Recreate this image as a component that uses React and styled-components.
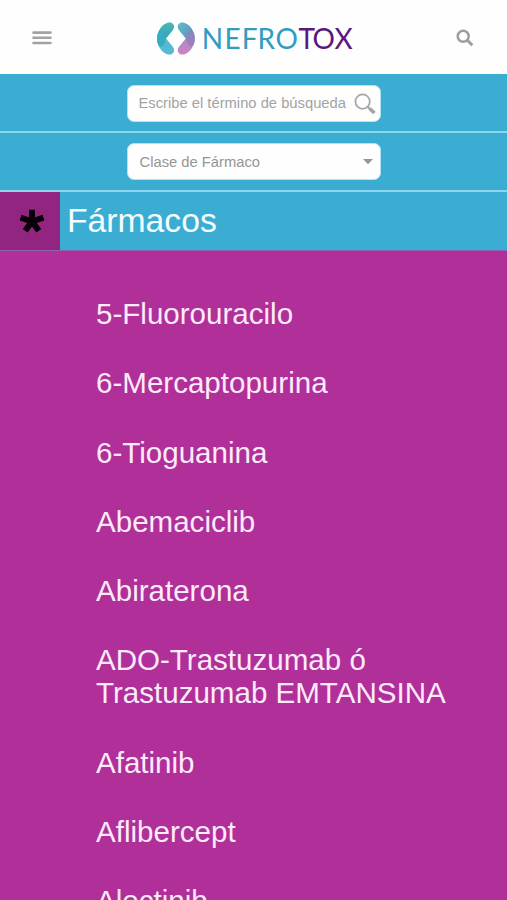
import React from "react";
import styled, { createGlobalStyle } from "styled-components";

const GlobalStyle = createGlobalStyle`
  * { box-sizing: border-box; }
  html, body { margin: 0; overflow: hidden; background: #b02f99; }
  body, input, button { font-family: "Liberation Sans", Arial, sans-serif; }
`;

const Page = styled.div`
  display: flex;
  flex-direction: column;
  height: 900px;
  overflow: hidden;
  background: #b02f99;
`;

const Header = styled.header`
  display: flex;
  flex: none;
  align-items: center;
  justify-content: space-between;
  height: 74px;
  padding: 1px 33px 0 32px;
  background: #fefefe;
`;

const IconButton = styled.button`
  display: flex;
  padding: 0;
  border: 0;
  background: none;
`;

const Logo = styled.svg`
  display: block;
  margin-top: 2px;
  margin-right: -1px;
`;

const LogoText = styled.text`
  font-family: Lato, sans-serif;
  font-size: 28px;
  font-weight: 400;
  fill: ${(p) => p.$color};
`;

const FilterBar = styled.div`
  display: flex;
  flex: none;
  justify-content: center;
  height: ${(p) => p.$height}px;
  padding-top: ${(p) => p.$top}px;
  border-bottom: 2px solid #8ed5ee;
  background: #3badd3;
`;

const Field = styled.div`
  display: flex;
  align-items: center;
  justify-content: space-between;
  width: 254px;
  height: 37px;
  padding: 0 ${(p) => p.$right}px 0 ${(p) => p.$left}px;
  border: 1px solid #b5e2f1;
  border-radius: 7px;
  background: #fefefe;
`;

const SearchInput = styled.input`
  width: 213px;
  height: 20px;
  margin-top: -2px;
  padding: 0;
  border: 0;
  outline: 0;
  background: none;
  font-size: 14.75px;
  &::placeholder { color: #a3a3a3; opacity: 1; }
`;

const SelectLabel = styled.span`
  color: #969696;
  font-size: 14.75px;
  line-height: 20px;
`;

const SectionBar = styled.div`
  display: flex;
  flex: none;
  height: 59px;
  border-bottom: 1px solid #8b63b3;
  background: #3badd3;
`;

const SectionMark = styled.div`
  display: flex;
  align-items: center;
  justify-content: center;
  width: 60px;
  padding-left: 4px;
  background: #91257f;
`;

const SectionTitle = styled.h1`
  margin: 0;
  padding: 8px 0 0 7px;
  color: #f4fdff;
  font-size: 33.7px;
  font-weight: 400;
  line-height: 40px;
`;

const DrugList = styled.ul`
  display: flex;
  flex-direction: column;
  gap: 36.3px;
  margin: 0;
  padding: 46px 50px 0 96px;
  list-style: none;
`;

const Drug = styled.li`
  flex: none;
  color: #fdeafb;
  font-size: 29.55px;
  line-height: 33px;
`;

const drugs = [
  "5-Fluorouracilo",
  "6-Mercaptopurina",
  "6-Tioguanina",
  "Abemaciclib",
  "Abiraterona",
  "ADO-Trastuzumab ó Trastuzumab EMTANSINA",
  "Afatinib",
  "Aflibercept",
  "Alectinib",
];

function NefrotoxLogo() {
  return (
    <Logo width="196" height="36" viewBox="157 21 196 36" role="img" aria-label="Nefrotox">
      <defs>
        <linearGradient id="leftTop" x1="0" y1="0" x2="0" y2="1">
          <stop offset="0" stopColor="#4ab9b5" />
          <stop offset="1" stopColor="#2597b5" />
        </linearGradient>
        <linearGradient id="rightTop" x1="0" y1="0" x2="1" y2="1">
          <stop offset="0" stopColor="#53c2cc" />
          <stop offset="1" stopColor="#7779b8" />
        </linearGradient>
        <linearGradient id="rightBottom" x1="0" y1="0" x2="0" y2="1">
          <stop offset="0" stopColor="#8089c0" />
          <stop offset="1" stopColor="#ca70bb" />
        </linearGradient>
      </defs>
      <path d="M173.3 24.2C170.5 20.3 163.8 23.2 160.5 28C156.2 34.2 156 43 159.4 46.5C162.6 48 164.8 44 166 38.5L172.6 30.6C174.3 28.5 174.6 26.2 173.3 24.2Z" fill="url(#leftTop)" />
      <path d="M173.3 52.8C170.5 56.7 163.8 53.8 160.5 49C156.2 42.8 156 34 159.4 30.5C162.6 29.5 164.8 34 166 38.5L172.6 46.4C174.3 48.5 174.6 50.8 173.3 52.8Z" fill="#37aec8" opacity=".85" />
      <path d="M178.5 24.2C181.3 20.3 188 23.2 191.3 28C195.6 34.2 195.8 43 192.4 46.5C189.2 48 187 44 185.8 38.5L179.2 30.6C177.5 28.5 177.2 26.2 178.5 24.2Z" fill="url(#rightTop)" />
      <path d="M178.5 52.8C181.3 56.7 188 53.8 191.3 49C195.6 42.8 195.8 34 192.4 30.5C189.2 29.5 187 34 185.8 38.5L179.2 46.4C177.5 48.5 177.2 50.8 178.5 52.8Z" fill="url(#rightBottom)" opacity=".88" />
      <LogoText $color="#319dbe" x="201.8 224.6 241.8 257.6 275.6" y="48.6">NEFRO</LogoText>
      <LogoText $color="#5c177e" x="298.4 312.4 334.6" y="48.6">TOX</LogoText>
    </Logo>
  );
}

export default function App() {
  return (
    <>
      <GlobalStyle />
      <Page>
        <Header>
          <IconButton aria-label="Menú">
            <svg width="20" height="16" viewBox="0 0 20 16" stroke="#a4a2a3" strokeWidth="2.6" strokeLinecap="round">
              <path d="M1.5 2.6H18.5M1.5 7.8H18.5M1.5 13H18.5" />
            </svg>
          </IconButton>
          <NefrotoxLogo />
          <IconButton aria-label="Buscar">
            <svg width="18" height="18" viewBox="0 0 18 18" fill="none" stroke="#9d9d9d">
              <circle cx="7.2" cy="7.2" r="5.5" strokeWidth="2.5" />
              <path d="M11.3 11.3L16.3 16.3" strokeWidth="3" />
            </svg>
          </IconButton>
        </Header>
        <FilterBar $height={59} $top={11}>
          <Field $left={11} $right={4}>
            <SearchInput placeholder="Escribe el término de búsqueda" />
            <svg width="22" height="22" viewBox="0 0 22 22" fill="none" stroke="#a5a5a5">
              <circle cx="8.6" cy="8.6" r="7.2" strokeWidth="1.7" />
              <path d="M13.7 13.7L16 16" strokeWidth="2" />
              <path d="M15.5 15.5L20.5 20" strokeWidth="3.6" />
            </svg>
          </Field>
        </FilterBar>
        <FilterBar $height={59} $top={10}>
          <Field $left={12} $right={6}>
            <SelectLabel>Clase de Fármaco</SelectLabel>
            <svg width="12" height="8" viewBox="0 0 12 8">
              <path d="M1 1H11L6 6.2Z" fill="#969696" />
            </svg>
          </Field>
        </FilterBar>
        <SectionBar>
          <SectionMark>
            <svg width="26" height="24" viewBox="0 0 26 24" stroke="#080008" strokeWidth="6">
              <path d="M13 12.5V0.8M13 12.5L1.6 8.7M13 12.5L24.4 8.7M13 12.5L6.2 21.8M13 12.5L19.8 21.8" />
            </svg>
          </SectionMark>
          <SectionTitle>Fármacos</SectionTitle>
        </SectionBar>
        <DrugList>
          {drugs.map((name) => (
            <Drug key={name}>{name}</Drug>
          ))}
        </DrugList>
      </Page>
    </>
  );
}
